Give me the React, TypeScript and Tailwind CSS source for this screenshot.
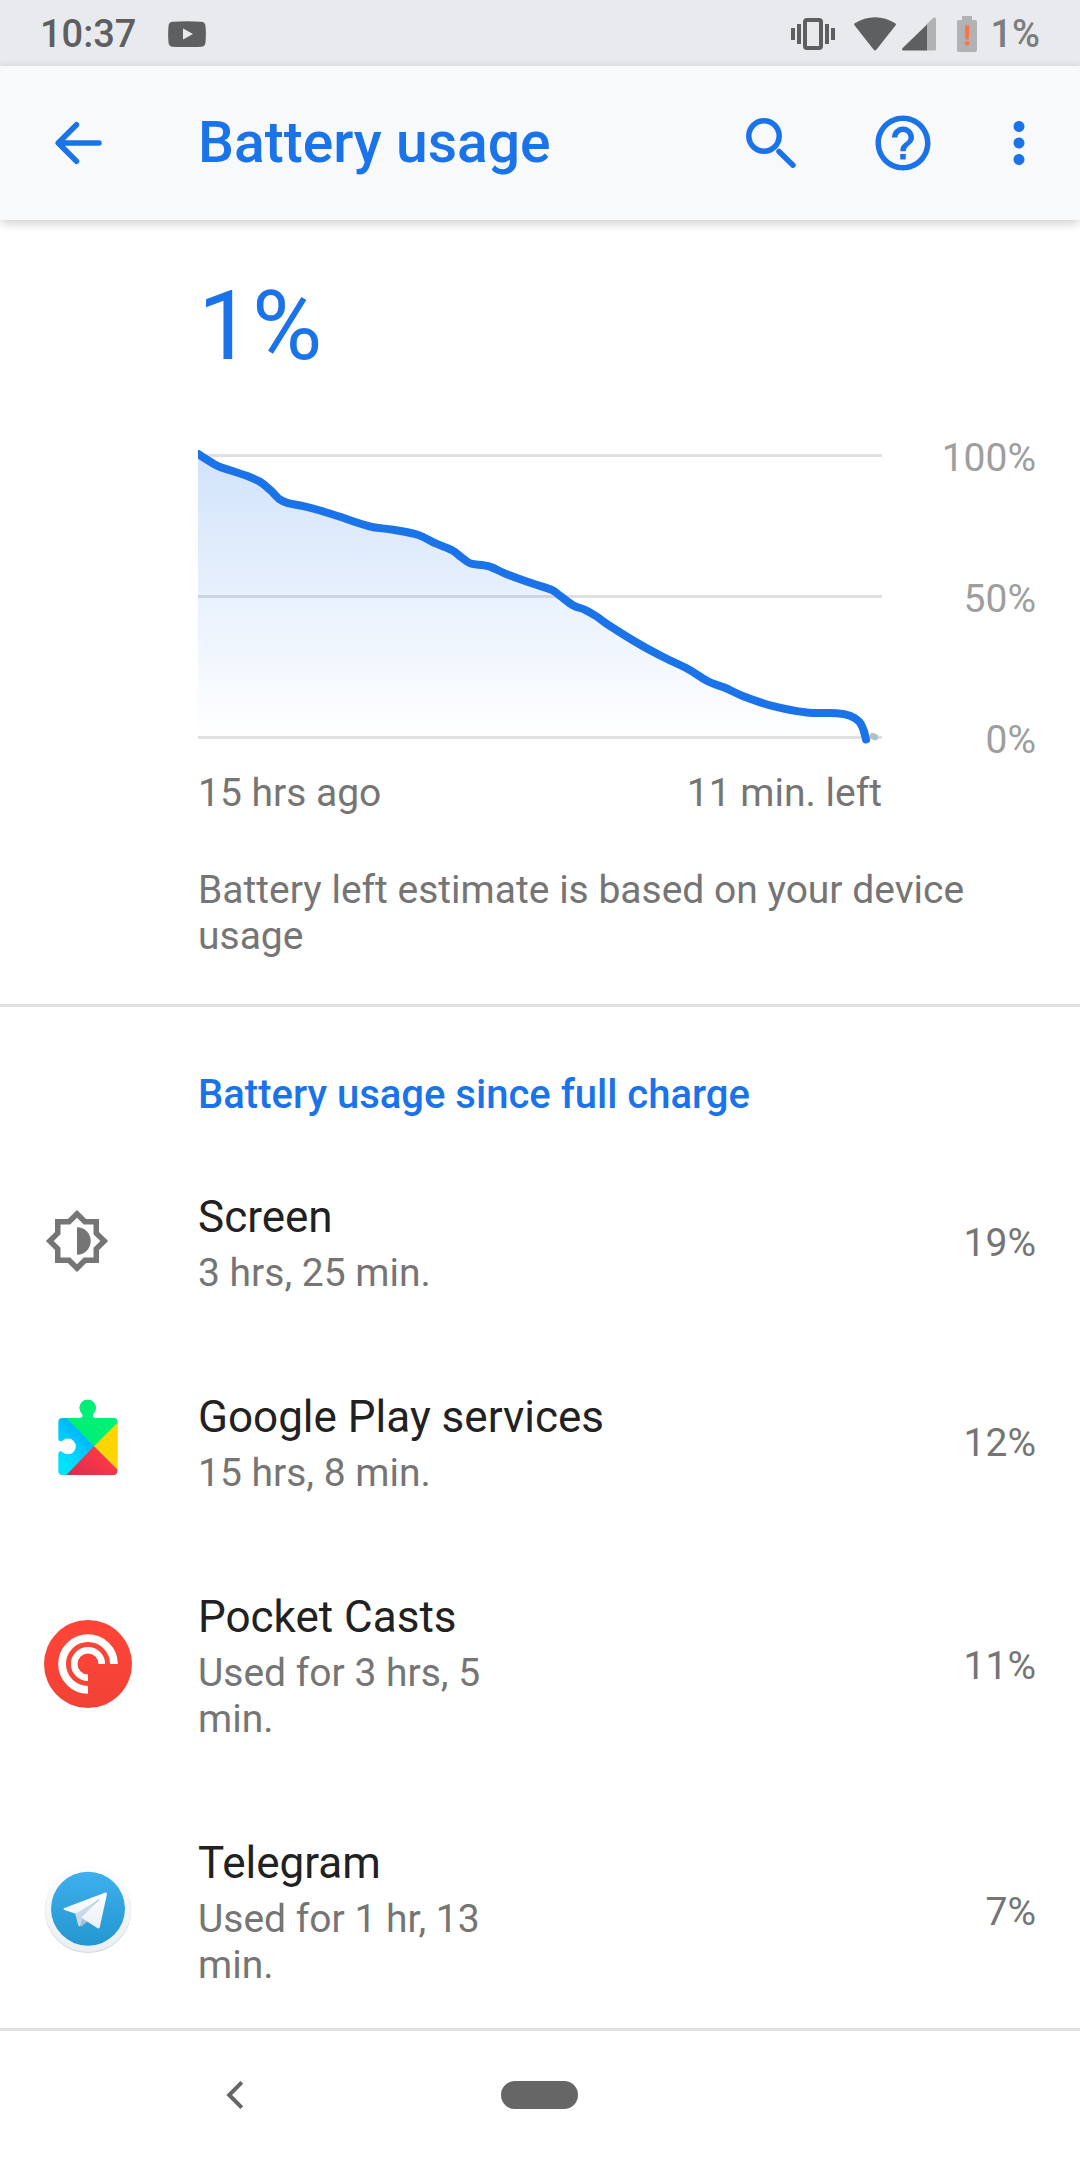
import type { ReactNode } from "react";
import { MdHelpOutline, MdMoreVert } from "react-icons/md";

interface UsageItem {
  name: string;
  detail: string;
  percent: string;
  icon: ReactNode;
}

type Point = [number, number];

// x is the distance along the time axis, y the distance below the 100% line
const LEVELS: Point[] = [
  [0, -1.5], [18.7, 10], [32, 14.7], [48.7, 20.3], [62, 26.3], [72, 34.3],
  [82, 44], [90.3, 47.7], [105.3, 50.7], [122, 55], [142, 61.3], [162, 68],
  [175.3, 71.7], [195.3, 74.3], [220.3, 79.5], [237, 87.7], [253.7, 94.5],
  [263.7, 102], [272.7, 108], [290.3, 110.7], [308.7, 118.7], [335.3, 128.3],
  [353.7, 134.3], [362, 140.3], [375.3, 150], [387, 154.3], [398.7, 161],
  [408.7, 168.3], [442, 189], [468.7, 203.3], [490.3, 213.7], [510.3, 226],
  [527, 232.3], [545.3, 240.7], [575.3, 250.7], [608.7, 257], [638.7, 257.7],
  [652, 260.3], [661.3, 266.3], [665.3, 274], [668, 284],
];

function smoothPath(points: Point[]) {
  let d = `M${points[0][0]} ${points[0][1]}`;
  for (let i = 0; i < points.length - 1; i++) {
    const before = points[Math.max(i - 1, 0)];
    const from = points[i];
    const to = points[i + 1];
    const after = points[Math.min(i + 2, points.length - 1)];
    const c1 = [from[0] + (to[0] - before[0]) / 6, from[1] + (to[1] - before[1]) / 6];
    const c2 = [to[0] - (after[0] - from[0]) / 6, to[1] - (after[1] - from[1]) / 6];
    d += `C${c1[0]} ${c1[1]} ${c2[0]} ${c2[1]} ${to[0]} ${to[1]}`;
  }
  return d;
}

function ScreenIcon() {
  return (
    <svg viewBox="0 0 24 24" className="size-[66px]" fill="#757575" aria-hidden="true">
      <path d="M20 8.69V4h-4.69L12 .69 8.69 4H4v4.69L.69 12 4 15.31V20h4.69L12 23.31 15.31 20H20v-4.69L23.31 12 20 8.69zm-2 5.79V18h-3.52L12 20.48 9.52 18H6v-3.52L3.52 12 6 9.52V6h3.52L12 3.52 14.48 6H18v3.52L20.48 12 18 14.48z" />
      <path d="M12 17c2.76 0 5-2.24 5-5s-2.24-5-5-5v10z" />
    </svg>
  );
}

function PlayServicesIcon() {
  return (
    <svg viewBox="0 0 88 88" className="size-[88px]" aria-hidden="true">
      <defs>
        <clipPath id="puzzle">
          <path d="M18.3 21H36c2.6 0 3.4-2 2.3-4a8.1 8.1 0 1 1 10.8 0c-1.1 2-.3 4 2.3 4h17.9a4 4 0 0 1 4 4v49a4 4 0 0 1-4 4h-51a4 4 0 0 1-4-4V57.5c0-3.2 2.2-4 4.2-2.3a7.9 7.9 0 1 0 0-11.5c-2 1.5-4.2.6-4.2-2.6V25a4 4 0 0 1 4-4z" />
        </clipPath>
        <linearGradient id="playBlue" x1="45" y1="30" x2="15" y2="62" gradientUnits="userSpaceOnUse">
          <stop offset="0" stopColor="#00a8ff" />
          <stop offset="0.5" stopColor="#00c8ff" />
          <stop offset="1" stopColor="#00e2ff" />
        </linearGradient>
        <linearGradient id="playRed" x1="58" y1="54" x2="34" y2="86" gradientUnits="userSpaceOnUse">
          <stop offset="0" stopColor="#ff3a44" />
          <stop offset="1" stopColor="#d82b50" />
        </linearGradient>
      </defs>
      <g clipPath="url(#puzzle)">
        <rect width="88" height="88" fill="url(#playBlue)" />
        <path d="M50 49.3 1.7 0H88v12.7z" fill="#00f076" />
        <path d="M50 49.3 88 11.3v76z" fill="#ffd500" />
        <path d="M50 49.3 88 87.3V88H12.7z" fill="url(#playRed)" />
      </g>
    </svg>
  );
}

function PocketCastsIcon() {
  return (
    <svg viewBox="0 0 88 88" className="size-[88px]" fill="none" aria-hidden="true">
      <defs>
        <linearGradient id="pocket" x1="0" y1="0" x2="0" y2="1">
          <stop offset="0" stopColor="#ff4538" />
          <stop offset="1" stopColor="#f24236" />
        </linearGradient>
      </defs>
      <circle cx="44" cy="44" r="44" fill="url(#pocket)" />
      <path d="M44 69.9A25.9 25.9 0 1 1 69.9 44" stroke="#fff" strokeWidth="7.8" />
      <path d="M44 57.8A13.8 13.8 0 1 1 57.8 44" stroke="#fff" strokeWidth="6.6" />
    </svg>
  );
}

function TelegramIcon() {
  return (
    <svg viewBox="0 0 88 88" className="size-[88px]" aria-hidden="true">
      <defs>
        <linearGradient id="telegramRim" x1="0" y1="0" x2="0" y2="1">
          <stop offset="0" stopColor="#fdfdfe" />
          <stop offset="1" stopColor="#e9eff4" />
        </linearGradient>
        <linearGradient id="telegram" x1="0" y1="0" x2="0" y2="1">
          <stop offset="0" stopColor="#3db0ee" />
          <stop offset="1" stopColor="#2496cf" />
        </linearGradient>
        <linearGradient id="plane" x1="0" y1="0" x2="0" y2="1">
          <stop offset="0" stopColor="#ffffff" />
          <stop offset="1" stopColor="#e8eff5" />
        </linearGradient>
      </defs>
      <circle cx="44" cy="44" r="43.3" fill="#d9dcdf" />
      <circle cx="44" cy="43.1" r="43" fill="url(#telegramRim)" />
      <circle cx="44" cy="42.7" r="37" fill="url(#telegram)" />
      <path d="M31 46.500 55 32.500 39 52l-2.700 8c-1 .5-1.800 0-2.200-1z" fill="#c8daea" />
      <path d="m38.5 51 5 4.5-5.8 4.7c-.8.6-1.4.4-1.3-.4z" fill="#a9c0d6" />
      <path
        d="M20.5 42.1c-1.3.6-1.2 1.6 0 2l11.2 3.6L56.2 32.5 37.9 50.9c-.5.6-.3 1 .2 1.4l15.1 9.8c1.3.8 2.3.3 2.6-1.1l7.1-32.4c.4-1.9-.6-2.5-2.1-1.9z"
        fill="url(#plane)"
      />
    </svg>
  );
}

const ITEMS: UsageItem[] = [
  { name: "Screen", detail: "3 hrs, 25 min.", percent: "19%", icon: <ScreenIcon /> },
  { name: "Google Play services", detail: "15 hrs, 8 min.", percent: "12%", icon: <PlayServicesIcon /> },
  { name: "Pocket Casts", detail: "Used for 3 hrs, 5 min.", percent: "11%", icon: <PocketCastsIcon /> },
  { name: "Telegram", detail: "Used for 1 hr, 13 min.", percent: "7%", icon: <TelegramIcon /> },
];

function StatusBar() {
  return (
    <div className="flex h-[66px] shrink-0 items-center justify-between bg-[#e8eaed] px-10 pt-0.5 text-[38px] leading-[46px] font-medium text-[#5d5f61]">
      <div className="flex items-center gap-8">
        <span>10:37</span>
        <svg viewBox="0 0 38 26" className="h-[26px] w-[38px]" aria-hidden="true">
          <path
            d="M5 .7C14 0 24 0 33 .7c3 .2 4.3 1.5 4.5 4.5.5 5 .5 11 0 16-.2 3-1.5 4.3-4.5 4.5-9 .5-19 .5-28 0-3-.2-4.3-1.5-4.5-4.5-.5-5-.5-11 0-16C.7 2.2 2 .9 5 .7zM15 7.5v11l10-5.5z"
            fill="#5d5f61"
          />
        </svg>
      </div>
      <div className="flex items-center">
        <svg viewBox="0 0 44 34" className="mr-[19px] h-[34px] w-11" fill="#5d5f61" aria-hidden="true">
          <path d="M0 11h4v12H0zM6 7h4v20H6zM34 7h4v20h-4zM40 11h4v12h-4z" />
          <rect x="14" y="3" width="16" height="28" rx="2" fill="none" stroke="#5d5f61" strokeWidth="4" />
        </svg>
        <svg viewBox="0 0 42 34" className="mr-1.5 h-[34px] w-[42px]" fill="#5d5f61" aria-hidden="true">
          <path d="M.7 8.4C-.2 7.6 0 6.8.8 6.2 13-1.8 29-1.8 41.2 6.2c.8.6 1 1.4.3 2.2L22.3 32.8c-.8 1-1.8 1-2.6 0z" />
        </svg>
        <svg viewBox="0 0 34 34" className="mr-5 h-[34px] w-[34px]" aria-hidden="true">
          <path d="M31 1c1.5-1.2 3-.6 3 1.2V32c0 1-.6 1.6-1.6 1.6H24V8z" fill="#b0b2b4" />
          <path d="M25 7.4v26.2H1.8C0 33.6-.5 32.2.7 31z" fill="#5d5f61" />
        </svg>
        <svg viewBox="0 0 22 36" className="mr-3 h-9 w-[22px]" aria-hidden="true">
          <path d="M6 0h10v4h3c1.5 0 2 .7 2 2v28c0 1.3-.7 2-2 2H3c-1.3 0-2-.7-2-2V6c0-1.3.6-2 2-2h3z" fill="#b0b2b4" />
          <path d="M9 9.5h4.2l-.4 14H9.4z" fill="#ff7043" />
          <circle cx="11.1" cy="27.3" r="2.2" fill="#ff7043" />
        </svg>
        <span className="text-[#7b7d7f]">1%</span>
      </div>
    </div>
  );
}

function AppBar() {
  return (
    <header className="relative flex h-[154px] shrink-0 items-center bg-[#f8f9fb] pl-11 pr-7 text-[#1a73e8] shadow-[0_3px_10px_rgba(0,0,0,0.2)]">
      <button type="button" aria-label="Back" className="flex size-[66px] items-center">
        <svg viewBox="0 0 66 66" className="size-[66px]" fill="none" stroke="currentColor" strokeWidth="5.5" strokeLinecap="round" aria-hidden="true">
          <path d="M55 33H15M32.5 14.7 14.2 33l18.3 18.3" strokeLinejoin="round" />
        </svg>
      </button>
      <h1 className="ml-[88px] flex-1 text-[57px] leading-[64px] font-medium">Battery usage</h1>
      <div className="flex items-center gap-16">
        <button type="button" aria-label="Search">
          <svg viewBox="0 0 66 66" className="size-[66px]" fill="none" stroke="currentColor" strokeWidth="5.5" aria-hidden="true">
            <circle cx="24" cy="26" r="15.2" />
            <path d="M39 41.5 53 55.2" strokeLinecap="round" />
          </svg>
        </button>
        <button type="button" aria-label="Help">
          <MdHelpOutline className="size-[66px]" />
        </button>
      </div>
      <button type="button" aria-label="More options" className="ml-[50px]">
        <MdMoreVert className="size-[66px]" />
      </button>
    </header>
  );
}

function BatteryChart() {
  const line = smoothPath(LEVELS);
  return (
    <div className="flex">
      <svg
        viewBox="0 -9.5 684 300"
        preserveAspectRatio="none"
        className="mt-[11px] mb-[17px] h-[300px] min-w-0 flex-1"
        role="img"
        aria-label="Battery level over the last 15 hours"
      >
        <defs>
          <linearGradient id="level" x1="0" y1="0" x2="0" y2="282" gradientUnits="userSpaceOnUse">
            <stop offset="0" stopColor="#1a73e8" stopOpacity="0.2" />
            <stop offset="1" stopColor="#1a73e8" stopOpacity="0" />
          </linearGradient>
        </defs>
        <path d="M0 0H684M0 141H684M0 282H684" stroke="#e0e0e0" strokeWidth="3" />
        <path d={`${line}L668 282H0z`} fill="url(#level)" />
        <path d="M675 280.7 677 281.6" stroke="#b0bec5" strokeWidth="6.5" strokeLinecap="round" />
        <path d={line} fill="none" stroke="#1a73e8" strokeWidth="8" strokeLinecap="round" strokeLinejoin="round" />
      </svg>
      <div className="flex w-[154px] flex-col justify-between text-right text-[#9e9e9e]">
        <span>100%</span>
        <span>50%</span>
        <span>0%</span>
      </div>
    </div>
  );
}

function UsageRow({ name, detail, percent, icon }: UsageItem) {
  return (
    <li className="flex items-center px-11 pt-[47px] pb-[46px]">
      <div className="w-[154px] shrink-0 pb-[3px]">{icon}</div>
      <div className="flex-1">
        <h3 className="text-[44px] leading-[56px] text-[#212121]">{name}</h3>
        <p className="mt-[5px] max-w-[330px]">{detail}</p>
      </div>
      <span>{percent}</span>
    </li>
  );
}

function NavigationBar() {
  return (
    <nav className="grid h-[132px] shrink-0 grid-cols-3 place-items-center border-t-[3px] border-[#e0e0e0] bg-white px-[82px] pb-0.5">
      <button type="button" aria-label="Navigate back">
        <svg viewBox="0 0 18 28" className="h-7 w-[18px]" fill="none" stroke="#666" strokeWidth="4" aria-hidden="true">
          <path d="M15.8 1.4 3.2 14l12.6 12.6" />
        </svg>
      </button>
      <button type="button" aria-label="Home" className="h-7 w-[77px] rounded-full bg-[#666]" />
    </nav>
  );
}

export default function App() {
  return (
    <div className="flex h-screen flex-col overflow-hidden bg-white font-['Roboto',sans-serif]">
      <StatusBar />
      <AppBar />
      <main className="min-h-0 flex-1 overflow-y-auto text-[39px] leading-[46px] text-[#757575] [scrollbar-width:none]">
        <section className="border-b-[3px] border-[#e0e0e0] pt-[58px] pr-11 pb-[45px] pl-[198px]">
          <p className="mb-[61px] text-[96px] leading-[96px] text-[#1a73e8]">1%</p>
          <BatteryChart />
          <div className="mt-[7px] mr-[154px] flex justify-between">
            <span>15 hrs ago</span>
            <span>11 min. left</span>
          </div>
          <p className="mt-[51px]">Battery left estimate is based on your device usage</p>
        </section>
        <section>
          <h2 className="pt-[65px] pr-11 pb-6 pl-[198px] text-[40px] leading-[46px] font-medium text-[#1a73e8]">
            Battery usage since full charge
          </h2>
          <ul>
            {ITEMS.map((item) => (
              <UsageRow key={item.name} {...item} />
            ))}
          </ul>
        </section>
      </main>
      <NavigationBar />
    </div>
  );
}
